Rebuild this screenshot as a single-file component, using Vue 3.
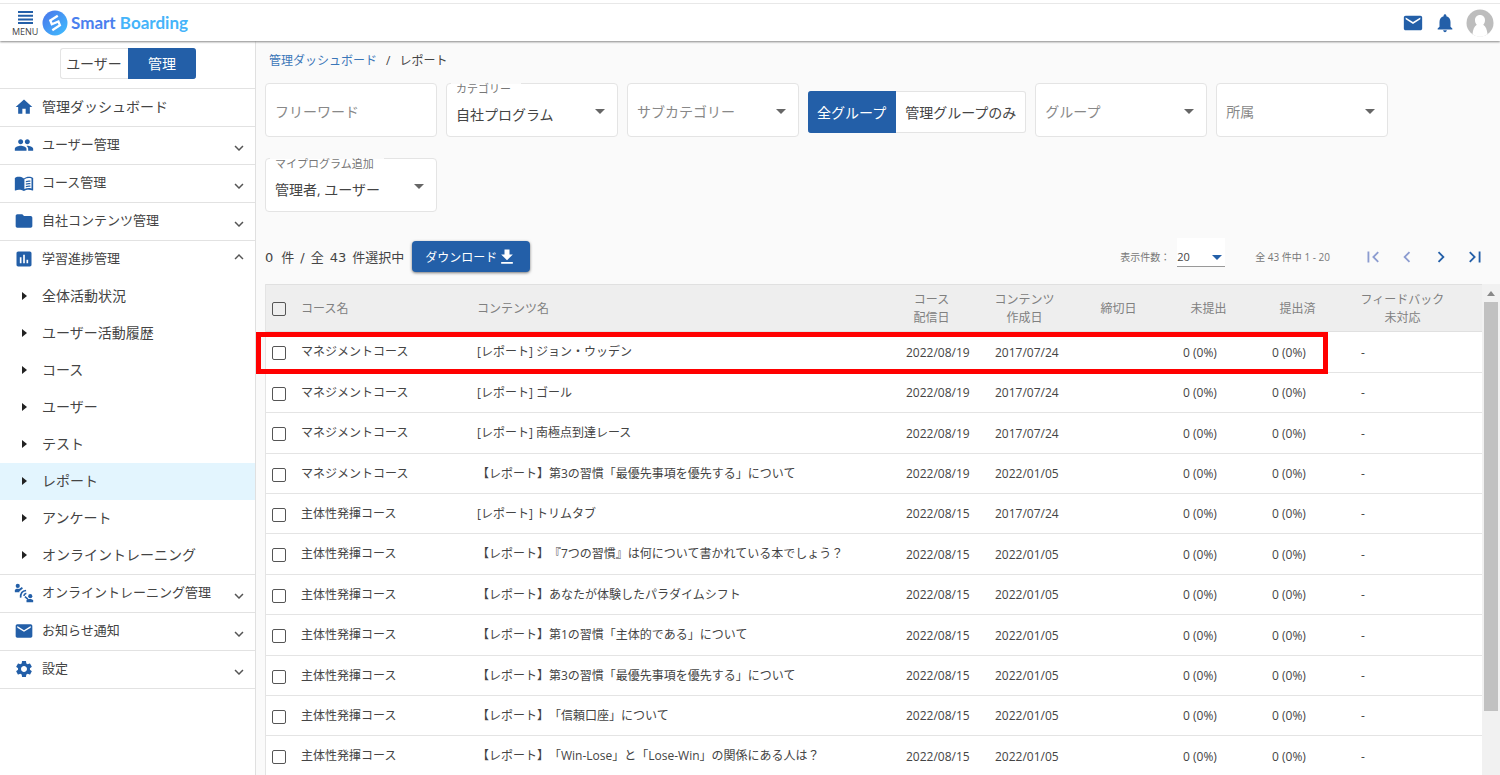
<script setup>
import { ref } from 'vue'

const icons = {
  home: 'M10 20v-6h4v6h5v-8h3L12 3 2 12h3v8z',
  people: 'M16 11c1.66 0 2.99-1.34 2.99-3S17.66 5 16 5s-3 1.34-3 3 1.34 3 3 3zm-8 0c1.66 0 2.99-1.34 2.99-3S9.66 5 8 5 5 6.34 5 8s1.34 3 3 3zm0 2c-2.33 0-7 1.17-7 3.5V19h14v-2.5c0-2.33-4.67-3.5-7-3.5zm8 0c-.29 0-.62.02-.97.05 1.16.84 1.97 1.97 1.97 3.45V19h6v-2.5c0-2.33-4.67-3.5-7-3.5z',
  book: 'M12 6.5C10 5 7.500 4.500 5.500 4.500S2.450 4.900 1 6v14.650c0 .4.400.500.750.300C3.100 20.450 4.500 20 6 20s4.200.4 6 1.500c1.350-.85 3.800-1.500 5.500-1.500 1.650 0 3.350.3 4.750 1.050.4.200.75-.1.750-.4V6c-3-2-8-2-11 .5zM21 18.500c-3-.9-6-.5-8.500.7V7.500C15 6 18 5.500 21 6.500zM14.200 9.700c1.800-.8 3.600-1 5.500-.6v1.500c-1.900-.4-3.700-.2-5.500.6zm0 3c1.800-.8 3.600-1 5.500-.6v1.500c-1.900-.4-3.700-.2-5.500.6zm0 3c1.800-.8 3.600-1 5.500-.6v1.500c-1.900-.4-3.700-.2-5.500.6z',
  folder: 'M10 4H4c-1.100 0-1.990.9-1.990 2L2 18c0 1.100.9 2 2 2h16c1.100 0 2-.9 2-2V8c0-1.100-.9-2-2-2h-8z',
  chart: 'M19 3H5c-1.100 0-2 .9-2 2v14c0 1.100.9 2 2 2h14c1.100 0 2-.9 2-2V5c0-1.100-.9-2-2-2zM9 17H7v-7h2zm4 0h-2V7h2zm4 0h-2v-4h2z',
  mail: 'M20 4H4c-1.100 0-1.990.9-1.990 2L2 18c0 1.100.9 2 2 2h16c1.100 0 2-.9 2-2V6c0-1.100-.9-2-2-2zm0 4l-8 5-8-5V6l8 5 8-5z',
  gear: 'M19.14 12.94c.04-.3.06-.61.06-.94 0-.32-.02-.64-.07-.94l2.03-1.58c.18-.14.23-.41.12-.61l-1.92-3.32c-.12-.22-.37-.29-.59-.22l-2.39.96c-.5-.38-1.03-.7-1.62-.94l-.36-2.54c-.04-.24-.24-.41-.48-.41h-3.84c-.24 0-.43.17-.47.41l-.36 2.54c-.59.24-1.13.57-1.62.94l-2.39-.96c-.22-.08-.47 0-.59.22L2.74 8.87c-.12.21-.08.47.12.61l2.03 1.58c-.05.3-.09.63-.09.94s.02.64.07.94l-2.03 1.58c-.18.14-.23.41-.12.61l1.92 3.32c.12.22.37.29.59.22l2.39-.96c.5.38 1.03.7 1.62.94l.36 2.54c.05.24.24.41.48.41h3.84c.24 0 .44-.17.47-.41l.36-2.54c.59-.24 1.13-.56 1.62-.94l2.39.96c.22.08.47 0 .59-.22l1.92-3.32c.12-.22.07-.47-.12-.61zM12 15.600c-1.980 0-3.600-1.620-3.600-3.600s1.620-3.600 3.600-3.600 3.600 1.620 3.600 3.600-1.620 3.600-3.600 3.600z',
  bell: 'M12 22c1.100 0 2-.9 2-2h-4c0 1.100.89 2 2 2zm6-6v-5c0-3.070-1.640-5.640-4.500-6.320V4c0-.83-.67-1.500-1.500-1.500s-1.500.67-1.500 1.500v.68C7.630 5.360 6 7.920 6 11v5l-2 2v1h16v-1z',
  down: 'M7.410 8.590 12 13.170l4.590-4.580L18 10l-6 6-6-6z',
  up: 'M7.410 15.410 12 10.830l4.590 4.580L18 14l-6-6-6 6z',
  download: 'M19 9h-4V3H9v6H5l7 7zM5 18v2h14v-2z',
  first: 'M18.410 16.590 13.820 12l4.590-4.590L17 6l-6 6 6 6zM6 6h2v12H6z',
  prev: 'M15.410 7.410 14 6l-6 6 6 6 1.410-1.410L10.830 12z',
  next: 'M10 6 8.590 7.410 13.170 12l-4.580 4.590L10 18l6-6z',
  last: 'M5.590 7.410 10.180 12l-4.590 4.590L7 18l6-6-6-6zM16 6h2v12h-2z',
}

const menu = [
  { label: '管理ダッシュボード', icon: 'home', large: true },
  { label: 'ユーザー管理', icon: 'people', arrow: 'down' },
  { label: 'コース管理', icon: 'book', arrow: 'down' },
  { label: '自社コンテンツ管理', icon: 'folder', arrow: 'down' },
  {
    label: '学習進捗管理',
    icon: 'chart',
    arrow: 'up',
    children: ['全体活動状況', 'ユーザー活動履歴', 'コース', 'ユーザー', 'テスト', 'レポート', 'アンケート', 'オンライントレーニング'],
  },
  { label: 'オンライントレーニング管理', icon: 'online', arrow: 'down' },
  { label: 'お知らせ通知', icon: 'mail', arrow: 'down' },
  { label: '設定', icon: 'gear', arrow: 'down' },
]
const current = 'レポート'

const freeWord = ref('')
const m = 'マネジメントコース'
const s = '主体性発揮コース'
const rows = [
  [m, '[レポート] ジョン・ウッデン', '2022/08/19', '2017/07/24'],
  [m, '[レポート] ゴール', '2022/08/19', '2017/07/24'],
  [m, '[レポート] 南極点到達レース', '2022/08/19', '2017/07/24'],
  [m, '【レポート】第3の習慣「最優先事項を優先する」について', '2022/08/19', '2022/01/05'],
  [s, '[レポート] トリムタブ', '2022/08/15', '2017/07/24'],
  [s, '【レポート】『7つの習慣』は何について書かれている本でしょう？', '2022/08/15', '2022/01/05'],
  [s, '【レポート】あなたが体験したパラダイムシフト', '2022/08/15', '2022/01/05'],
  [s, '【レポート】第1の習慣「主体的である」について', '2022/08/15', '2022/01/05'],
  [s, '【レポート】第3の習慣「最優先事項を優先する」について', '2022/08/15', '2022/01/05'],
  [s, '【レポート】「信頼口座」について', '2022/08/15', '2022/01/05'],
  [s, '【レポート】「Win-Lose」と「Lose-Win」の関係にある人は？', '2022/08/15', '2022/01/05'],
]
</script>

<template>
  <div class="app">
    <header class="topbar">
      <button class="menu-btn" type="button">
        <svg class="bars" viewBox="0 0 15 13" aria-hidden="true"><path d="M0 1h15M0 4.700h15M0 8.400h15M0 12h15" /></svg>
        MENU
      </button>
      <a class="logo" href="#">
        <svg viewBox="0 0 26 26" aria-hidden="true">
          <defs>
            <linearGradient id="mark" x1="0" y1="0" x2="1" y2="1">
              <stop offset="0" stop-color="#4a73ea" />
              <stop offset="1" stop-color="#3fc0ff" />
            </linearGradient>
          </defs>
          <circle cx="13" cy="13" r="12.500" fill="url(#mark)" />
          <path d="M15.800 5.800 8.300 10.500l1.500 3.700 6.600-2.800 1.500 3.900-7.600 4.900" fill="none" stroke="#fff" stroke-width="2.300" />
        </svg>
        <span class="brand"><span class="smart">Smart</span> Boarding</span>
      </a>
      <nav class="tools">
        <button type="button" aria-label="メール"><svg viewBox="0 0 24 24"><path :d="icons.mail" /></svg></button>
        <button type="button" aria-label="通知"><svg viewBox="0 0 24 24"><path :d="icons.bell" /></svg></button>
        <button class="avatar" type="button" aria-label="アカウント">
          <svg viewBox="0 0 28 28">
            <circle cx="14" cy="14" r="13.500" fill="#bdbdbd" />
            <path d="M14 6c3 0 5 2.200 5 5.200 0 2-.9 3.500-1.800 4.500 2.600 1.500 3.800 5 4.300 9.300C18 28.500 10 28.500 6.500 25c.5-4.300 1.700-7.800 4.300-9.300-.9-1-1.800-2.500-1.800-4.500C9 8.200 11 6 14 6z" fill="#fff" />
          </svg>
        </button>
      </nav>
    </header>

    <div class="body">
      <aside class="side">
        <div class="mode">
          <button type="button">ユーザー</button>
          <button type="button" class="on">管理</button>
        </div>
        <ul class="nav">
          <li v-for="item in menu" :key="item.label">
            <a href="#" class="item" :class="{ large: item.large }">
              <svg v-if="item.icon === 'online'" class="ico" viewBox="0 0 24 24">
                <circle cx="4.500" cy="3.500" r="2.500" />
                <path d="M1 11V8.500C2 7 4 6.700 6 7.200l3.500-2.400 1.200 1.700-4.200 3.300V11zM15 23v-2.500c1.500-1.800 6-1.800 8 0V23zM12.500 17.200l1.200-1.600 3.500 3-1.200 1.500z" />
                <circle cx="19.500" cy="15.800" r="2.500" />
                <path d="M8 17.500c-.3-4.500 2-8 6.500-8.500M11.800 15.500c.2-1.800 1.200-2.800 3-3.200" class="wave" />
              </svg>
              <svg v-else class="ico" viewBox="0 0 24 24"><path :d="icons[item.icon]" fill-rule="evenodd" /></svg>
              <span>{{ item.label }}</span>
              <svg v-if="item.arrow" class="arrow" :class="item.arrow" viewBox="0 0 24 24"><path :d="icons[item.arrow]" /></svg>
            </a>
            <ul v-if="item.children" class="sub">
              <li v-for="c in item.children" :key="c">
                <a href="#" :class="{ current: c === current }"><i class="caret"></i>{{ c }}</a>
              </li>
            </ul>
          </li>
        </ul>
      </aside>

      <main class="main">
        <nav class="crumbs"><a href="#">管理ダッシュボード</a><span>/</span><span>レポート</span></nav>

        <form class="filters" @submit.prevent>
          <div class="field"><input v-model="freeWord" type="text" placeholder="フリーワード" aria-label="フリーワード" /></div>
          <div class="field filled">
            <label for="cat">カテゴリー</label>
            <select id="cat"><option>自社プログラム</option></select>
          </div>
          <div class="field drop"><select aria-label="サブカテゴリー"><option>サブカテゴリー</option></select></div>
          <div class="toggle">
            <button type="button" class="on">全グループ</button>
            <button type="button">管理グループのみ</button>
          </div>
          <div class="field drop"><select aria-label="グループ"><option>グループ</option></select></div>
          <div class="field drop"><select aria-label="所属"><option>所属</option></select></div>
          <div class="field filled">
            <label for="my">マイプログラム追加</label>
            <select id="my"><option>管理者, ユーザー</option></select>
          </div>
        </form>

        <div class="actions">
          <div class="count"><span class="picked">0</span><span>件</span><span>/</span><span>全</span><span>43</span><span>件選択中</span></div>
          <button class="download" type="button">ダウンロード<svg viewBox="0 0 24 24"><path :d="icons.download" /></svg></button>
          <div class="pager">
            <label for="per">表示件数：</label>
            <div class="per"><select id="per"><option>20</option></select></div>
            <span class="range">全 43 件中 1 - 20</span>
            <button type="button" disabled aria-label="最初"><svg viewBox="0 0 24 24"><path :d="icons.first" /></svg></button>
            <button type="button" disabled aria-label="前へ"><svg viewBox="0 0 24 24"><path :d="icons.prev" /></svg></button>
            <button type="button" aria-label="次へ"><svg viewBox="0 0 24 24"><path :d="icons.next" /></svg></button>
            <button type="button" aria-label="最後"><svg viewBox="0 0 24 24"><path :d="icons.last" /></svg></button>
          </div>
        </div>

        <section class="list">
          <div class="scroller">
            <table>
              <colgroup>
                <col class="c-check" /><col class="c-course" /><col /><col class="c-date" /><col class="c-date" />
                <col class="c-due" /><col class="c-date" /><col class="c-date" /><col class="c-feed" />
              </colgroup>
              <thead>
                <tr>
                  <th><input type="checkbox" aria-label="すべて選択" /></th>
                  <th class="left">コース名</th>
                  <th class="left">コンテンツ名</th>
                  <th>コース<br />配信日</th>
                  <th class="mid">コンテンツ<br />作成日</th>
                  <th class="mid">締切日</th>
                  <th>未提出</th>
                  <th>提出済</th>
                  <th class="feed">フィードバック<br />未対応</th>
                </tr>
              </thead>
              <tbody>
                <tr v-for="(r, i) in rows" :key="i">
                  <td><input type="checkbox" :aria-label="r[1]" /></td>
                  <td class="name">{{ r[0] }}</td>
                  <td class="name">{{ r[1] }}</td>
                  <td>{{ r[2] }}</td>
                  <td>{{ r[3] }}</td>
                  <td></td>
                  <td>0 (0%)</td>
                  <td>0 (0%)</td>
                  <td>-</td>
                </tr>
              </tbody>
            </table>
          </div>
          <div class="bar"><i class="tip"></i><div class="thumb"></div></div>
          <div class="frame"></div>
        </section>
      </main>
    </div>
  </div>
</template>

<style>
body { overflow: hidden; }
</style>

<style scoped>
.app {
  --blue: #235fa8;
  height: 100vh;
  display: flex;
  flex-direction: column;
  background: #fafafa;
  color: #444;
  font: 13px "Open Sans", "Noto Sans CJK JP", sans-serif;
}
.app * { box-sizing: border-box; }
button, input, select { font: inherit; color: inherit; margin: 0; }
button { border: 0; padding: 0; background: none; }
a { color: inherit; text-decoration: none; }
ul { list-style: none; margin: 0; padding: 0; }
svg { display: block; fill: currentColor; }

.topbar {
  flex: none;
  height: 41px;
  padding-top: 4px;
  display: flex;
  align-items: center;
  background: linear-gradient(#fff 3px, #e8e8e8 3px, #e8e8e8 4px, #fff 4px);
  box-shadow: 0 1px 2px #888;
  position: relative;
}
.menu-btn { width: 26px; margin-left: 12px; padding-top: 4px; font-size: 9px; line-height: 12px; }
.bars { width: 15px; height: 13px; margin: 0 auto 2px; stroke: var(--blue); stroke-width: 2; }
.logo { display: flex; align-items: center; gap: 3px; margin-left: 4px; }
.logo svg { width: 26px; height: 26px; }
.brand { font: bold 17px/24px Lato, sans-serif; color: #45b4fa; white-space: nowrap; }
.smart { color: #4a80ee; }
.tools { margin-left: auto; display: flex; align-items: center; color: var(--blue); }
.tools button { margin-right: 10px; }
.tools svg { width: 22px; height: 22px; }
.tools .avatar { margin-right: 6px; }
.tools .avatar svg { width: 28px; height: 28px; }

.body { flex: 1; min-height: 0; display: flex; }
.side { flex: none; width: 256px; background: #fff; border-right: 1px solid #e0e0e0; }
.mode { height: 47px; display: flex; justify-content: center; padding-top: 7px; }
.mode button { width: 68px; height: 31px; padding-bottom: 2px; border: 1px solid #e4e4e4; border-right: 0; border-radius: 3px 0 0 3px; font-size: 14px; }
.mode .on { background: var(--blue); border-color: var(--blue); color: #fff; border-radius: 0 3px 3px 0; }
.nav > li { border-top: 1px solid #e2e2e2; }
.nav > li:last-child { border-bottom: 1px solid #e2e2e2; }
.item { height: 37px; display: flex; align-items: center; padding: 0 7px 2px 14px; font-size: 13px; }
.item span { padding-bottom: 2px; }
.large { font-size: 14px; }
.ico { width: 20px; height: 20px; margin-right: 8px; color: var(--blue); }
.wave { fill: none; stroke: currentColor; stroke-width: 2; }
.arrow { width: 18px; height: 18px; margin-left: auto; color: #555; }
.arrow.down { margin-top: 6px; }
.arrow.up { margin-bottom: 4px; }
.sub a { height: 37px; display: flex; align-items: center; padding: 0 0 3px 22px; font-size: 14px; }
.sub .current { background: #e3f5fe; }
.caret { width: 0; height: 0; border: 4px solid transparent; border-left: 5px solid #222; border-right: 0; margin: 2px 15px 0 0; }

.main { flex: 1; min-width: 0; display: flex; flex-direction: column; padding-left: 9px; }
.crumbs { display: flex; gap: 9px; padding-left: 4px; margin-top: 9px; font-size: 12px; line-height: 22px; }
.crumbs a { color: #3a76b8; }
.filters { display: flex; flex-wrap: wrap; align-items: center; gap: 21px 9px; margin-top: 11px; }
.field { position: relative; width: 172px; height: 54px; border: 1px solid #e4e4e4; border-radius: 4px; background: #fff; }
.field input, .field select { width: 100%; height: 100%; border: 0; outline: 0; background: none; padding: 2px 9px 0; appearance: none; font-size: 14px; }
.field input::placeholder { color: #888; opacity: 1; }
.drop select { color: #888; }
.field.filled select { padding-top: 8px; }
.field label { position: absolute; left: 4px; top: -4px; padding: 0 10px 0 5px; border-radius: 3px; font-size: 11px; line-height: 18px; height: 18px; color: #777; background: linear-gradient(#fafafa 4px, #fff 4px); }
.drop::after, .filled::after, .per::after {
  content: "";
  position: absolute;
  right: 12px;
  top: 25px;
  border: 5px solid transparent;
  border-top-color: #666;
  border-bottom: 0;
  pointer-events: none;
}
.toggle { display: flex; height: 42px; margin-top: 4px; font-size: 14px; }
.toggle button { padding: 0 9px; border: 1px solid #e4e4e4; border-left: 0; border-radius: 0 3px 3px 0; background: #fff; }
.toggle .on { background: var(--blue); border-color: var(--blue); color: #fff; border-radius: 3px 0 0 3px; }

.actions { display: flex; align-items: center; height: 31px; margin-top: 29px; }
.count { display: flex; align-items: baseline; gap: 6px; font: 13px "DejaVu Sans", "Noto Sans CJK JP", sans-serif; white-space: nowrap; }
.picked { margin-right: 2px; }
.download { display: flex; align-items: center; height: 31px; margin-left: 8px; padding: 0 13px; border-radius: 4px; background: var(--blue); color: #fff; box-shadow: 0 1px 3px #777; font-size: 12px; }
.download svg { width: 20px; height: 20px; }
.pager { margin-left: auto; margin-right: 14px; display: flex; align-items: center; font-size: 10px; color: #777; }
.per { position: relative; width: 48px; height: 29px; margin: -8px 30px 0 7px; background: #fff; border-bottom: 1px solid #999; }
.per select { width: 100%; height: 100%; padding: 8px 0 0; border: 0; background: none; appearance: none; color: #444; font-size: 11px; }
.per::after { right: 3px; top: 17px; border-top-color: var(--blue); }
.range { margin-right: 20px; }
.pager button { color: var(--blue); margin-left: 12px; }
.pager button:disabled { color: #8c9cd0; }
.pager svg { width: 22px; height: 22px; }

.list { flex: 1; min-height: 0; position: relative; display: flex; margin-top: 12px; }
.scroller { flex: 1; min-width: 0; overflow: hidden; border-left: 1px solid #e4e4e4; background: #fff; }
table { width: 100%; table-layout: fixed; border-collapse: separate; border-spacing: 0; font-size: 12px; }
.c-check { width: 25px; }
.c-course { width: 176px; }
.c-date { width: 89px; }
.c-due { width: 99px; }
.c-feed { width: 131px; }
th { height: 48px; padding: 1px 18px 0 0; background: #eee; border-top: 1px solid #e0e0e0; border-bottom: 1px solid #e0e0e0; font-weight: 400; line-height: 18px; color: #808080; white-space: nowrap; }
th.left { text-align: left; padding-left: 10px; }
th.mid { padding-right: 10px; }
th.feed { padding-right: 28px; }
td { height: 40px; padding: 0 0 0 10px; border-bottom: 1px solid #e4e4e4; white-space: nowrap; }
tbody tr:nth-child(5n + 1) td, tbody tr:nth-child(5n + 3) td { height: 41px; }
th:first-child, td:first-child { padding: 2px 0 0 6px; text-align: left; }
.name { padding-bottom: 2px; text-spacing-trim: space-all; }
input[type="checkbox"] { display: block; appearance: none; width: 14px; height: 14px; border: 1px solid #555; border-radius: 2px; background: #fff; }
th input[type="checkbox"] { background: none; }
.bar { flex: none; width: 18px; padding: 0 2px; background: #f1f1f1; display: flex; flex-direction: column; align-items: center; }
.tip { border: 4px solid transparent; border-bottom: 5px solid #888; border-top: 0; margin: 7px 0 6px; }
.thumb { width: 100%; height: 409px; background: #c1c1c1; }
.frame { position: absolute; left: -9px; right: 172px; top: 48px; height: 42px; border: 5px solid #f00; }
</style>
